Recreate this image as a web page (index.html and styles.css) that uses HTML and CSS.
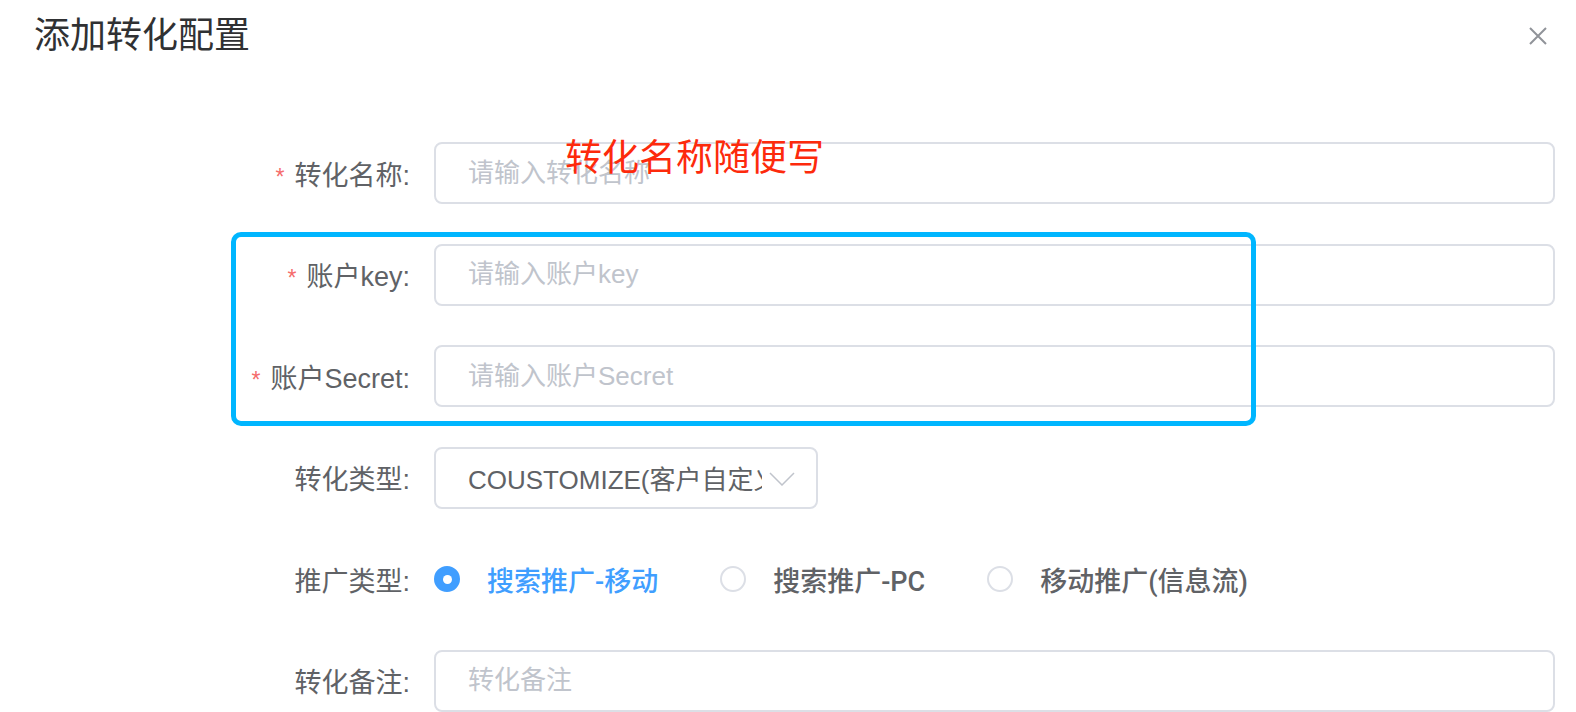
FILE: index.html
```html
<!DOCTYPE html>
<html lang="zh-CN">
<head>
  <meta charset="UTF-8">
  <meta name="viewport" content="width=device-width, initial-scale=1.0">
  <title>添加转化配置</title>
  <link rel="stylesheet" href="styles.css">
</head>
<body>
  <div class="dialog">
    <div class="dialog-header">
      <h2 class="dialog-title">添加转化配置</h2>
      <button class="dialog-close" aria-label="close">
        <svg width="20" height="20" viewBox="0 0 20 20"><path d="M2 2 L18 18 M18 2 L2 18" stroke="#909399" stroke-width="2" fill="none"/></svg>
      </button>
    </div>

    <form class="form">
      <div class="form-item">
        <label class="form-label required">转化名称:</label>
        <div class="form-content"><input class="input" type="text" placeholder="请输入转化名称"></div>
      </div>

      <div class="form-item">
        <label class="form-label required">账户key:</label>
        <div class="form-content"><input class="input" type="text" placeholder="请输入账户key"></div>
      </div>

      <div class="form-item">
        <label class="form-label required">账户Secret:</label>
        <div class="form-content"><input class="input" type="text" placeholder="请输入账户Secret"></div>
      </div>

      <div class="form-item">
        <label class="form-label">转化类型:</label>
        <div class="form-content">
          <div class="select">
            <input class="input select-input" type="text" readonly value="COUSTOMIZE(客户自定义)">
            <svg class="select-arrow" width="26" height="14" viewBox="0 0 26 14"><path d="M1 1 L13 13 L25 1" stroke="#c0c4cc" stroke-width="1.5" fill="none"/></svg>
          </div>
        </div>
      </div>

      <div class="form-item">
        <label class="form-label">推广类型:</label>
        <div class="form-content radios">
          <label class="radio checked"><span class="radio-dot"></span>搜索推广-移动</label>
          <label class="radio"><span class="radio-dot"></span>搜索推广-PC</label>
          <label class="radio"><span class="radio-dot"></span>移动推广(信息流)</label>
        </div>
      </div>

      <div class="form-item">
        <label class="form-label">转化备注:</label>
        <div class="form-content"><input class="input" type="text" placeholder="转化备注"></div>
      </div>
    </form>

    <!-- annotations drawn over the screenshot -->
    <div class="note-text">转化名称随便写</div>
    <div class="note-box"></div>
  </div>
</body>
</html>
```

FILE: styles.css
```css
* {box-sizing: border-box;}
body {margin: 0; background: #fff; font-family: "Liberation Sans", "Noto Sans CJK SC", sans-serif; color: #606266; overflow: hidden;}
.dialog {position: relative; width: 1576px; height: 712px;}
.dialog-header {display: flex; align-items: center; justify-content: space-between; height: 72px; padding: 0 28px 0 34px;}
.dialog-title {margin: 0; font-size: 36px; font-weight: normal; color: #303133; line-height: 1;}
.dialog-close {border: 0; background: none; padding: 0; width: 20px; height: 20px; cursor: pointer;}
.dialog-close svg {display: block;}

.form {display: flex; flex-direction: column; gap: 39.5px; padding: 70px 21px 0 0;}
.form-item {display: flex; align-items: center; height: 62px;}
.form-label {width: 434px; padding-right: 24px; text-align: right; font-size: 27px; color: #606266; flex-shrink: 0;}
.form-label.required::before {content: "*"; color: #f56c6c; margin-right: 10px; font-size: 23px;}
.form-content {flex: 1; height: 100%; display: flex; align-items: center;}

.input {width: 100%; height: 62px; border: 2px solid #dcdfe6; border-radius: 8px; padding: 0 32px; font-family: inherit; font-size: 26px; color: #606266; outline: none; background: #fff;}
.input::placeholder {color: #c0c4cc;}

.select {position: relative; width: 384px;}
.select-input {padding-right: 54px;}
.select-arrow {position: absolute; right: 23px; top: 25px;}

.radios {gap: 62px;}
.radio {display: flex; align-items: center; gap: 27px; font-family: Roboto, "Noto Sans CJK SC", sans-serif; font-size: 27px; font-weight: 500; color: #606266;}
.radio-dot {width: 26px; height: 26px; border-radius: 50%; border: 2px solid #dcdfe6; background: #fff;}
.radio.checked {color: #409eff;}
.radio.checked .radio-dot {border-color: #409eff; background: #409eff; position: relative;}
.radio.checked .radio-dot::after {content: ""; position: absolute; left: 50%; top: 50%; width: 9px; height: 9px; margin: -4.5px 0 0 -4.5px; border-radius: 50%; background: #fff;}

.note-text {position: absolute; left: 565px; top: 137px; font-size: 37px; color: #fd2a0c; line-height: 1.2;}
.note-box {position: absolute; left: 231px; top: 232px; width: 1025px; height: 194px; border: 5px solid #00b6ff; border-radius: 10px; pointer-events: none;}
```
